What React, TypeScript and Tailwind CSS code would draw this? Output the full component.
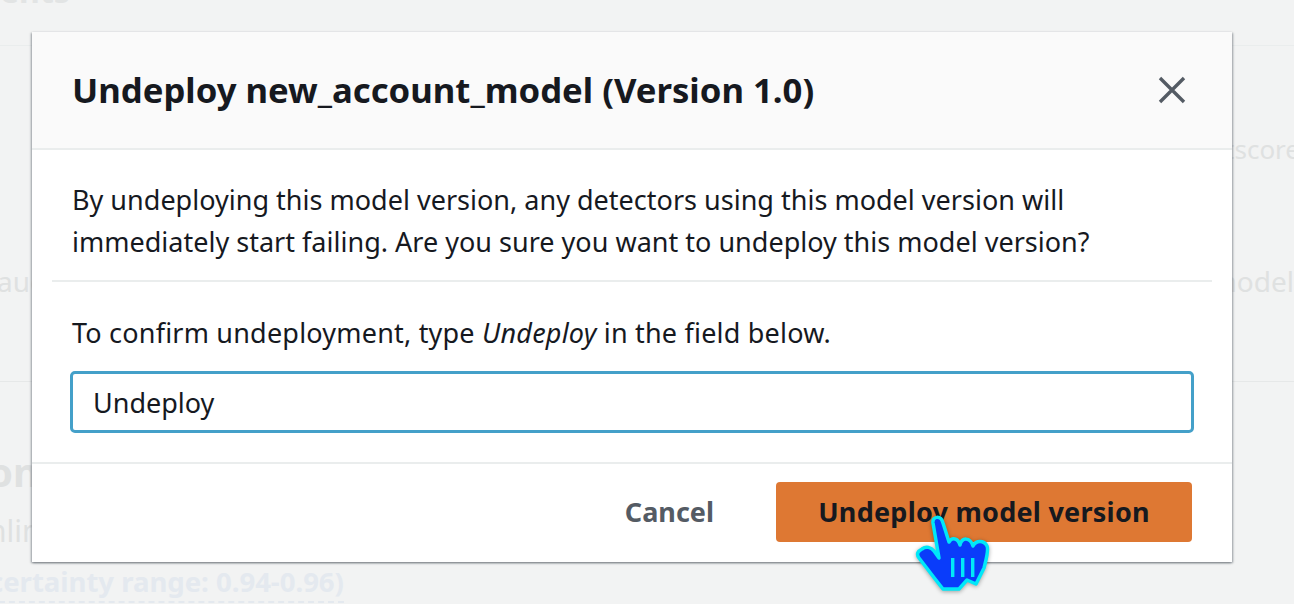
export default function App() {
  return (
    <div className="relative h-[604px] w-[1294px] overflow-hidden bg-[#f2f3f3] font-['Noto_Sans',sans-serif] text-[#16191f]">
      {/* faded page behind the modal */}
      <div className="flex flex-col text-[#dfe1e1]">
        <div className="h-[46px] border-b border-[#eaeded]">
          <div className="-mt-[29px] text-[32px] font-bold leading-[40px] text-[#e2e4e4]">ents</div>
        </div>
        <div className="flex h-[336px] flex-col border-b border-[#e6e8e8] pt-[82px] text-[28px] leading-[42px]">
          <div className="flex justify-end">
            <span className="-mr-[6px] text-[26px]">tscore</span>
          </div>
          <div className="mt-[90px] flex justify-between">
            <span className="-ml-[3px]">audit</span>
            <span>model</span>
          </div>
        </div>
        <div className="-ml-[12px] pt-[66px] text-[40px] font-bold leading-[48px]">on</div>
        <div className="-ml-[12px] pt-[14px] text-[30px] leading-[42px]">nlin</div>
        <div className="-ml-[11px] mt-[11px] w-fit whitespace-nowrap border-b-2 border-dashed border-[#e4e9ef] text-[27.5px] font-bold leading-[38px] text-[#e4e9ef]">
          certainty range: 0.94-0.96)
        </div>
      </div>

      {/* modal */}
      <div className="absolute left-[32px] top-[32px] flex h-[530px] w-[1200px] flex-col bg-white shadow-[-1px_1px_2px_rgba(84,91,100,0.55),1px_1px_2px_rgba(84,91,100,0.55)]">
        <div className="flex h-[118px] items-center justify-between border-b-2 border-[#eaeded] bg-[#fafafa] pl-[40px] pr-[45px]">
          <h1 className="whitespace-nowrap text-[34.7px] font-bold leading-[40px]">Undeploy new_account_model (Version 1.0)</h1>
          <svg width="30" height="30" viewBox="0 0 30 30" fill="none" stroke="#545b64" strokeWidth="3.4">
            <path d="M3 3 L27 27 M27 3 L3 27" />
          </svg>
        </div>

        <div className="flex h-[314px] flex-col border-b-2 border-[#eaeded] px-[20px]">
          <p className="border-b-2 border-[#eaeded] px-[20px] pb-[17px] pt-[29px] text-[27px] leading-[42px] tracking-[0.01px]">
            By undeploying this model version, any detectors using this model version will immediately start failing. Are you sure you want to undeploy this model version?
          </p>
          <p className="px-[20px] pt-[30px] text-[27px] leading-[42px] tracking-[0.2px]">
            To confirm undeployment, type <i>Undeploy</i> in the field below.
          </p>
          <div className="px-[18px] pt-[17px]">
            <input
              readOnly
              value="Undeploy"
              className="h-[62px] w-full rounded-[5px] border-[3.5px] border-[#44a0c9] bg-white px-[20px] text-[27px] text-[#16191f] outline-none"
            />
          </div>
        </div>

        <div className="flex flex-1 items-center justify-end gap-[62px] pb-[2px] pr-[40px]">
          <span className="text-[27px] font-bold text-[#545b64]">Cancel</span>
          <button className="h-[60px] w-[416px] rounded-[4px] bg-[#de7833] text-[27px] font-bold tracking-[0.25px] text-[#16191f]">
            Undeploy model version
          </button>
        </div>
      </div>

      {/* click cursor */}
      <svg className="absolute left-[914px] top-[512px] drop-shadow-[0_1px_2px_rgba(0,0,0,0.35)]" width="78" height="84" viewBox="0 0 78 84">
        <path
          d="M19 11 C18 4 27 3 29 11 L35 30 C38 25 44 26 46 33 C48 25 56 25 59 34 C62 28 70 28 73 34 C75 38 72 48 70 56 L62 72 L53 68 L45 77 L29 77 C20 66 12 55 5 46 C2 42 4 39 8 37 C12 34 17 35 20 39 L25 46 Z"
          fill="#0a3cfa"
          stroke="#00e8f8"
          strokeWidth="3.5"
          strokeLinejoin="round"
        />
        <path d="M38.7 46 V65 M48.7 46 V65 M58.7 46 V65" stroke="#00e8f8" strokeWidth="3.4" fill="none" />
      </svg>
    </div>
  );
}
